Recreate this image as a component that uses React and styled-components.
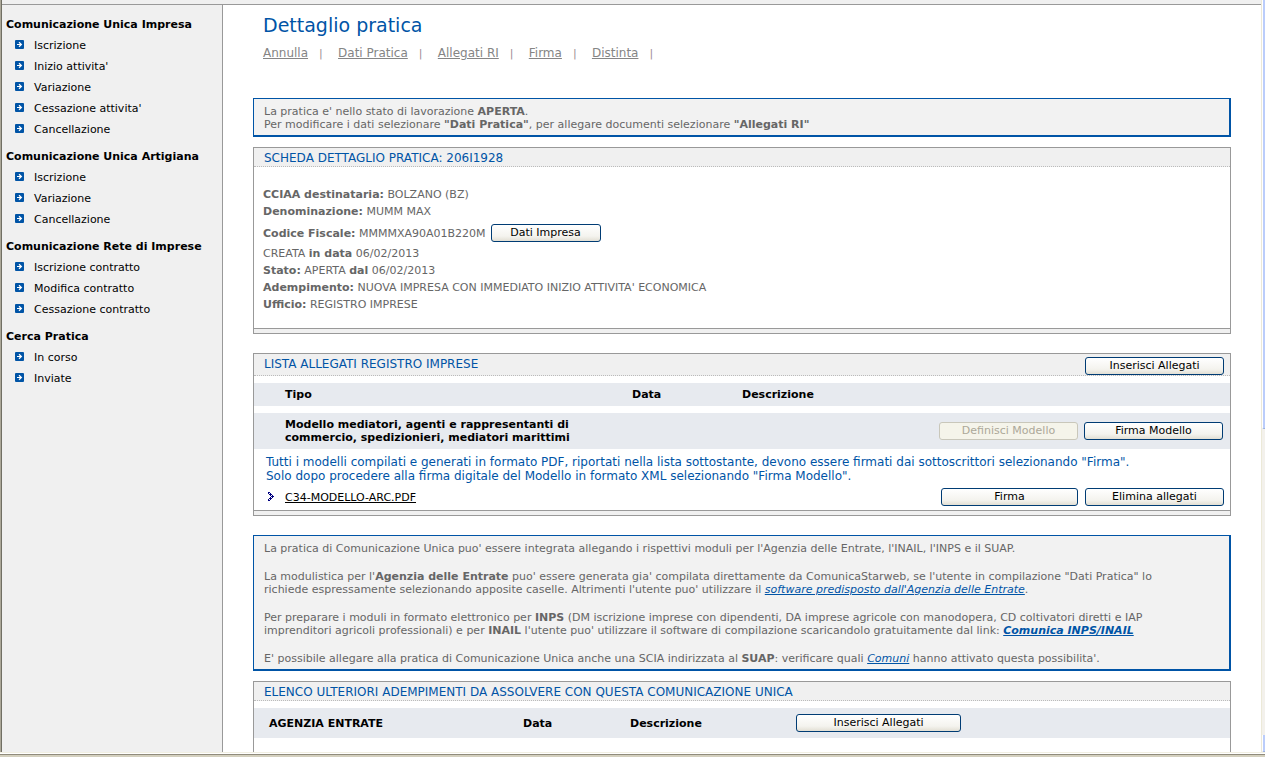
import React from 'react'
import styled, { createGlobalStyle, ThemeProvider } from 'styled-components'

const theme = {
    blue: '#0054a6',
    gray: '#666666',
    line: '#999999',
    light: '#f0f0f0',
    band: '#e7eaef',
}

const GlobalStyle = createGlobalStyle`
    * {
        box-sizing: border-box;
    }
    body {
        margin: 0;
        overflow: hidden;
        font-family: Verdana, "DejaVu Sans", sans-serif;
        font-size: 11px;
        color: ${theme.gray};
        background-color: #ffffff;
    }
    h1, h2, h3, p, ul {
        margin: 0;
        padding: 0;
        font-weight: normal;
    }
`

const Window = styled.div`
    display: flex;
    flex-direction: column;
    height: 100vh;
`
const Frame = styled.div`
    flex: 1;
    min-height: 0;
    display: flex;
    border-left: 1px solid #aca899;
`
const Page = styled.div`
    flex: 1;
    min-width: 0;
    display: flex;
    flex-direction: column;
    border-left: 1px solid #716f64;
`
const TopStrip = styled.div`
    flex: none;
    height: 5px;
    background-color: ${({ theme }) => theme.light};
    border-bottom: 1px solid ${({ theme }) => theme.line};
`
const Columns = styled.div`
    flex: 1;
    min-height: 0;
    display: flex;
`
const Scrollbar = styled.div`
    flex: none;
    width: 4px;
    display: flex;
    flex-direction: column;
    justify-content: space-between;
    background-color: #f3f1ec;
    border-left: 1px solid #ece9d8;
`
const Thumb = styled.div`
    height: ${({ $size }) => $size};
    background-color: #bbcdfb;
    border-left: 1px solid #ffffff;
    border-bottom: 1px solid #98b0e0;
    border-bottom-left-radius: 2px;
`
const BottomEdge = styled.div`
    flex: none;
    height: 5px;
    background-color: #d4d0be;
    border-top: 1px solid #f1efe2;
    box-shadow: inset 0 1px #ffffff, inset 0 2px #8f8b7c;
`

const Sidebar = styled.nav`
    flex: none;
    width: 221px;
    padding: 9px 4px;
    color: #000000;
    background-color: ${({ theme }) => theme.light};
    border-right: 1px solid ${({ theme }) => theme.line};
`
const MenuGroup = styled.section`
    margin-bottom: 6px;
`
const MenuTitle = styled.h3`
    font-size: 11px;
    font-weight: bold;
    line-height: 21px;
    white-space: nowrap;
`
const MenuList = styled.ul`
    list-style: none;
`
const MenuLink = styled.a`
    display: flex;
    align-items: center;
    gap: 10px;
    padding-left: 9px;
    line-height: 21px;
    color: #000000;
    text-decoration: none;
    &:hover {
        text-decoration: underline;
    }
`
const Bullet = styled.svg`
    margin-bottom: 2px;
`

const Main = styled.main`
    flex: 1;
    min-width: 0;
    overflow: hidden;
    padding: 8px 30px 0;
`
const Title = styled.h1`
    padding-left: 10px;
    font-size: 19px;
    line-height: 24px;
    color: ${({ theme }) => theme.blue};
`
const Tabs = styled.nav`
    display: flex;
    align-items: center;
    padding: 8px 10px 0;
    margin-bottom: 36px;
    line-height: 17px;
    color: #a08c94;
`
const TabLink = styled.a`
    font-size: 12px;
    color: #858585;
`
const Separator = styled.span`
    width: 30px;
    padding-left: 11px;
`

const Notice = styled.section`
    display: flex;
    flex-direction: column;
    gap: 15px;
    margin-bottom: 10px;
    padding: 6px 10px 4px;
    line-height: 13px;
    white-space: nowrap;
    background-color: #f2f2f2;
    border: 1px solid ${({ theme }) => theme.blue};
    border-right-width: 2px;
    border-bottom-width: 2px;
`
const InfoLink = styled.a`
    font-style: italic;
    font-weight: ${({ $bold }) => ($bold ? 'bold' : 'normal')};
    color: ${({ theme }) => theme.blue};
`

const Panel = styled.section`
    margin-bottom: 19px;
    border: 1px solid ${({ theme }) => theme.line};
`
const PanelHeader = styled.header`
    display: flex;
    align-items: flex-start;
    justify-content: space-between;
    padding: 3px 6px 0 10px;
    background-color: ${({ theme }) => theme.light};
    border-bottom: 1px dotted #bbbbbb;
`
const PanelTitle = styled.h2`
    font-size: 12px;
    line-height: 15px;
    color: ${({ theme }) => theme.blue};
`
const PanelFooter = styled.footer`
    height: 5px;
    background-color: ${({ theme }) => theme.light};
    border-top: 1px solid ${({ theme }) => theme.line};
`
const Details = styled.div`
    padding: 19px 9px 15px;
    line-height: 17px;
`
const CodeRow = styled.div`
    display: flex;
    align-items: flex-end;
    gap: 5px;
    height: 25px;
    padding-bottom: 3px;
`

const Button = styled.button`
    width: ${({ $width }) => $width || '139px'};
    height: 18px;
    padding: 0;
    font-family: inherit;
    font-size: 11px;
    line-height: 14px;
    color: #000000;
    background: linear-gradient(#ffffff, #f4f3ee 70%, #e2dfd4);
    border: 1px solid #003c74;
    border-radius: 3px;
    &:disabled {
        color: #aca899;
        background: #f5f4ea;
        border-color: #c9c7ba;
    }
`

const Table = styled.table`
    width: 100%;
    table-layout: fixed;
    border-collapse: separate;
    border-spacing: 0 7px;
    color: #000000;
    text-align: left;
    line-height: 13px;
`
const Row = styled.tr`
    height: ${({ $height }) => $height};
    background-color: ${({ theme }) => theme.band};
`
const Head = styled.th`
    width: ${({ $width }) => $width || 'auto'};
    padding: 0 0 0 ${({ $indent }) => $indent || '0'};
`
const Cell = styled.td`
    padding: 0 0 0 ${({ $indent }) => $indent || '0'};
    font-weight: bold;
`
const Actions = styled.div`
    display: flex;
    justify-content: flex-end;
    gap: 6px;
    padding-right: 7px;
`
const Instructions = styled.p`
    && {
        margin: -1px 0 1px;
    }
    padding: 0 12px;
    font-size: 12px;
    line-height: 14px;
    white-space: nowrap;
    color: ${({ theme }) => theme.blue};
`
const FileRow = styled.div`
    display: flex;
    align-items: center;
    gap: 7px;
    padding: 4px 6px 4px 13px;
`
const FileLink = styled.a`
    flex: 1;
    padding-left: 4px;
    color: #000000;
`

const BulletIcon = () => (
    <Bullet width="9" height="9" viewBox="0 0 9 9" aria-hidden="true">
        <rect width="9" height="9" rx="1" fill="#0054a6" />
        <path d="M2 4.5h4.5M4 2.2l2.4 2.3L4 6.8" fill="none" stroke="#ffffff" strokeWidth="1.2" />
    </Bullet>
)

const ArrowIcon = () => (
    <svg width="7" height="10" viewBox="0 0 7 10" shapeRendering="crispEdges" aria-hidden="true">
        <path
            d="M1 0h2v1h-2zM1 1h1v1h-1zM3 1h1v1h-1zM2 2h3v1h-3zM3 3h1v1h-1zM5 3h1v1h-1zM4 4h3v1h-3zM3 5h1v1h-1zM5 5h1v1h-1zM2 6h3v1h-3zM1 7h1v1h-1zM3 7h1v1h-1zM1 8h2v1h-2z"
            fill="#000080"
        />
    </svg>
)

const menu = [
    {
        title: 'Comunicazione Unica Impresa',
        items: ['Iscrizione', "Inizio attivita'", 'Variazione', "Cessazione attivita'", 'Cancellazione'],
    },
    { title: 'Comunicazione Unica Artigiana', items: ['Iscrizione', 'Variazione', 'Cancellazione'] },
    {
        title: 'Comunicazione Rete di Imprese',
        items: ['Iscrizione contratto', 'Modifica contratto', 'Cessazione contratto'],
    },
    { title: 'Cerca Pratica', items: ['In corso', 'Inviate'] },
]

const tabs = ['Annulla', 'Dati Pratica', 'Allegati RI', 'Firma', 'Distinta']

const SideMenu = () => (
    <Sidebar>
        {menu.map((group) => (
            <MenuGroup key={group.title}>
                <MenuTitle>{group.title}</MenuTitle>
                <MenuList>
                    {group.items.map((item) => (
                        <li key={item}>
                            <MenuLink href="#"><BulletIcon />{item}</MenuLink>
                        </li>
                    ))}
                </MenuList>
            </MenuGroup>
        ))}
    </Sidebar>
)

const PracticeDetails = () => (
    <Panel>
        <PanelHeader><PanelTitle>SCHEDA DETTAGLIO PRATICA: 206I1928</PanelTitle></PanelHeader>
        <Details>
            <p><b>CCIAA destinataria:</b> BOLZANO (BZ)</p>
            <p><b>Denominazione:</b> MUMM MAX</p>
            <CodeRow>
                <p><b>Codice Fiscale:</b> MMMMXA90A01B220M</p>
                <Button type="button" $width="110px">Dati Impresa</Button>
            </CodeRow>
            <p>CREATA <b>in data</b> 06/02/2013</p>
            <p><b>Stato:</b> APERTA <b>dal</b> 06/02/2013</p>
            <p><b>Adempimento:</b> NUOVA IMPRESA CON IMMEDIATO INIZIO ATTIVITA' ECONOMICA</p>
            <p><b>Ufficio:</b> REGISTRO IMPRESE</p>
        </Details>
        <PanelFooter />
    </Panel>
)

const Attachments = () => (
    <Panel>
        <PanelHeader>
            <PanelTitle>LISTA ALLEGATI REGISTRO IMPRESE</PanelTitle>
            <Button type="button">Inserisci Allegati</Button>
        </PanelHeader>
        <Table>
            <thead>
                <Row $height="23px">
                    <Head $width="378px" $indent="31px">Tipo</Head>
                    <Head $width="110px">Data</Head>
                    <Head>Descrizione</Head>
                </Row>
            </thead>
            <tbody>
                <Row $height="36px">
                    <Cell $indent="31px">
                        Modello mediatori, agenti e rappresentanti di<br />
                        commercio, spedizionieri, mediatori marittimi
                    </Cell>
                    <Cell />
                    <Cell>
                        <Actions>
                            <Button type="button" disabled>Definisci Modello</Button>
                            <Button type="button">Firma Modello</Button>
                        </Actions>
                    </Cell>
                </Row>
            </tbody>
        </Table>
        <Instructions>
            Tutti i modelli compilati e generati in formato PDF, riportati nella lista sottostante, devono essere firmati dai sottoscrittori selezionando "Firma".<br />
            Solo dopo procedere alla firma digitale del Modello in formato XML selezionando "Firma Modello".
        </Instructions>
        <FileRow>
            <ArrowIcon />
            <FileLink href="#">C34-MODELLO-ARC.PDF</FileLink>
            <Button type="button" $width="137px">Firma</Button>
            <Button type="button">Elimina allegati</Button>
        </FileRow>
        <PanelFooter />
    </Panel>
)

const OtherDuties = () => (
    <Panel>
        <PanelHeader>
            <PanelTitle>ELENCO ULTERIORI ADEMPIMENTI DA ASSOLVERE CON QUESTA COMUNICAZIONE UNICA</PanelTitle>
        </PanelHeader>
        <Table>
            <thead>
                <Row $height="30px">
                    <Head $width="269px" $indent="15px">AGENZIA ENTRATE</Head>
                    <Head $width="107px">Data</Head>
                    <Head $width="166px">Descrizione</Head>
                    <Cell><Button type="button" $width="165px">Inserisci Allegati</Button></Cell>
                </Row>
            </thead>
            <tbody>
                <tr><td colSpan="4">&nbsp;</td></tr>
            </tbody>
        </Table>
    </Panel>
)

const App = () => {
    return (
        <ThemeProvider theme={theme}>
            <GlobalStyle />
            <Window>
                <Frame>
                    <Page>
                        <TopStrip />
                        <Columns>
                            <SideMenu />
                            <Main>
                                <Title>Dettaglio pratica</Title>
                                <Tabs>
                                    {tabs.map((tab) => (
                                        <React.Fragment key={tab}>
                                            <TabLink href="#">{tab}</TabLink>
                                            <Separator>|</Separator>
                                        </React.Fragment>
                                    ))}
                                </Tabs>
                                <Notice>
                                    <p>
                                        La pratica e' nello stato di lavorazione <b>APERTA</b>.<br />
                                        Per modificare i dati selezionare <b>"Dati Pratica"</b>, per allegare documenti selezionare <b>"Allegati RI"</b>
                                    </p>
                                </Notice>
                                <PracticeDetails />
                                <Attachments />
                                <Notice>
                                    <p>La pratica di Comunicazione Unica puo' essere integrata allegando i rispettivi moduli per l'Agenzia delle Entrate, l'INAIL, l'INPS e il SUAP.</p>
                                    <p>
                                        La modulistica per l'<b>Agenzia delle Entrate</b> puo' essere generata gia' compilata direttamente da ComunicaStarweb, se l'utente in compilazione "Dati Pratica" lo<br />
                                        richiede espressamente selezionando apposite caselle. Altrimenti l'utente puo' utilizzare il <InfoLink href="#">software predisposto dall'Agenzia delle Entrate</InfoLink>.
                                    </p>
                                    <p>
                                        Per preparare i moduli in formato elettronico per <b>INPS</b> (DM iscrizione imprese con dipendenti, DA imprese agricole con manodopera, CD coltivatori diretti e IAP<br />
                                        imprenditori agricoli professionali) e per <b>INAIL</b> l'utente puo' utilizzare il software di compilazione scaricandolo gratuitamente dal link: <InfoLink href="#" $bold>Comunica INPS/INAIL</InfoLink>
                                    </p>
                                    <p>E' possibile allegare alla pratica di Comunicazione Unica anche una SCIA indirizzata al <b>SUAP</b>: verificare quali <InfoLink href="#">Comuni</InfoLink> hanno attivato questa possibilita'.</p>
                                </Notice>
                                <OtherDuties />
                            </Main>
                        </Columns>
                    </Page>
                    <Scrollbar>
                        <Thumb $size="57%" />
                        <Thumb $size="17px" />
                    </Scrollbar>
                </Frame>
                <BottomEdge />
            </Window>
        </ThemeProvider>
    )
}

export default App
